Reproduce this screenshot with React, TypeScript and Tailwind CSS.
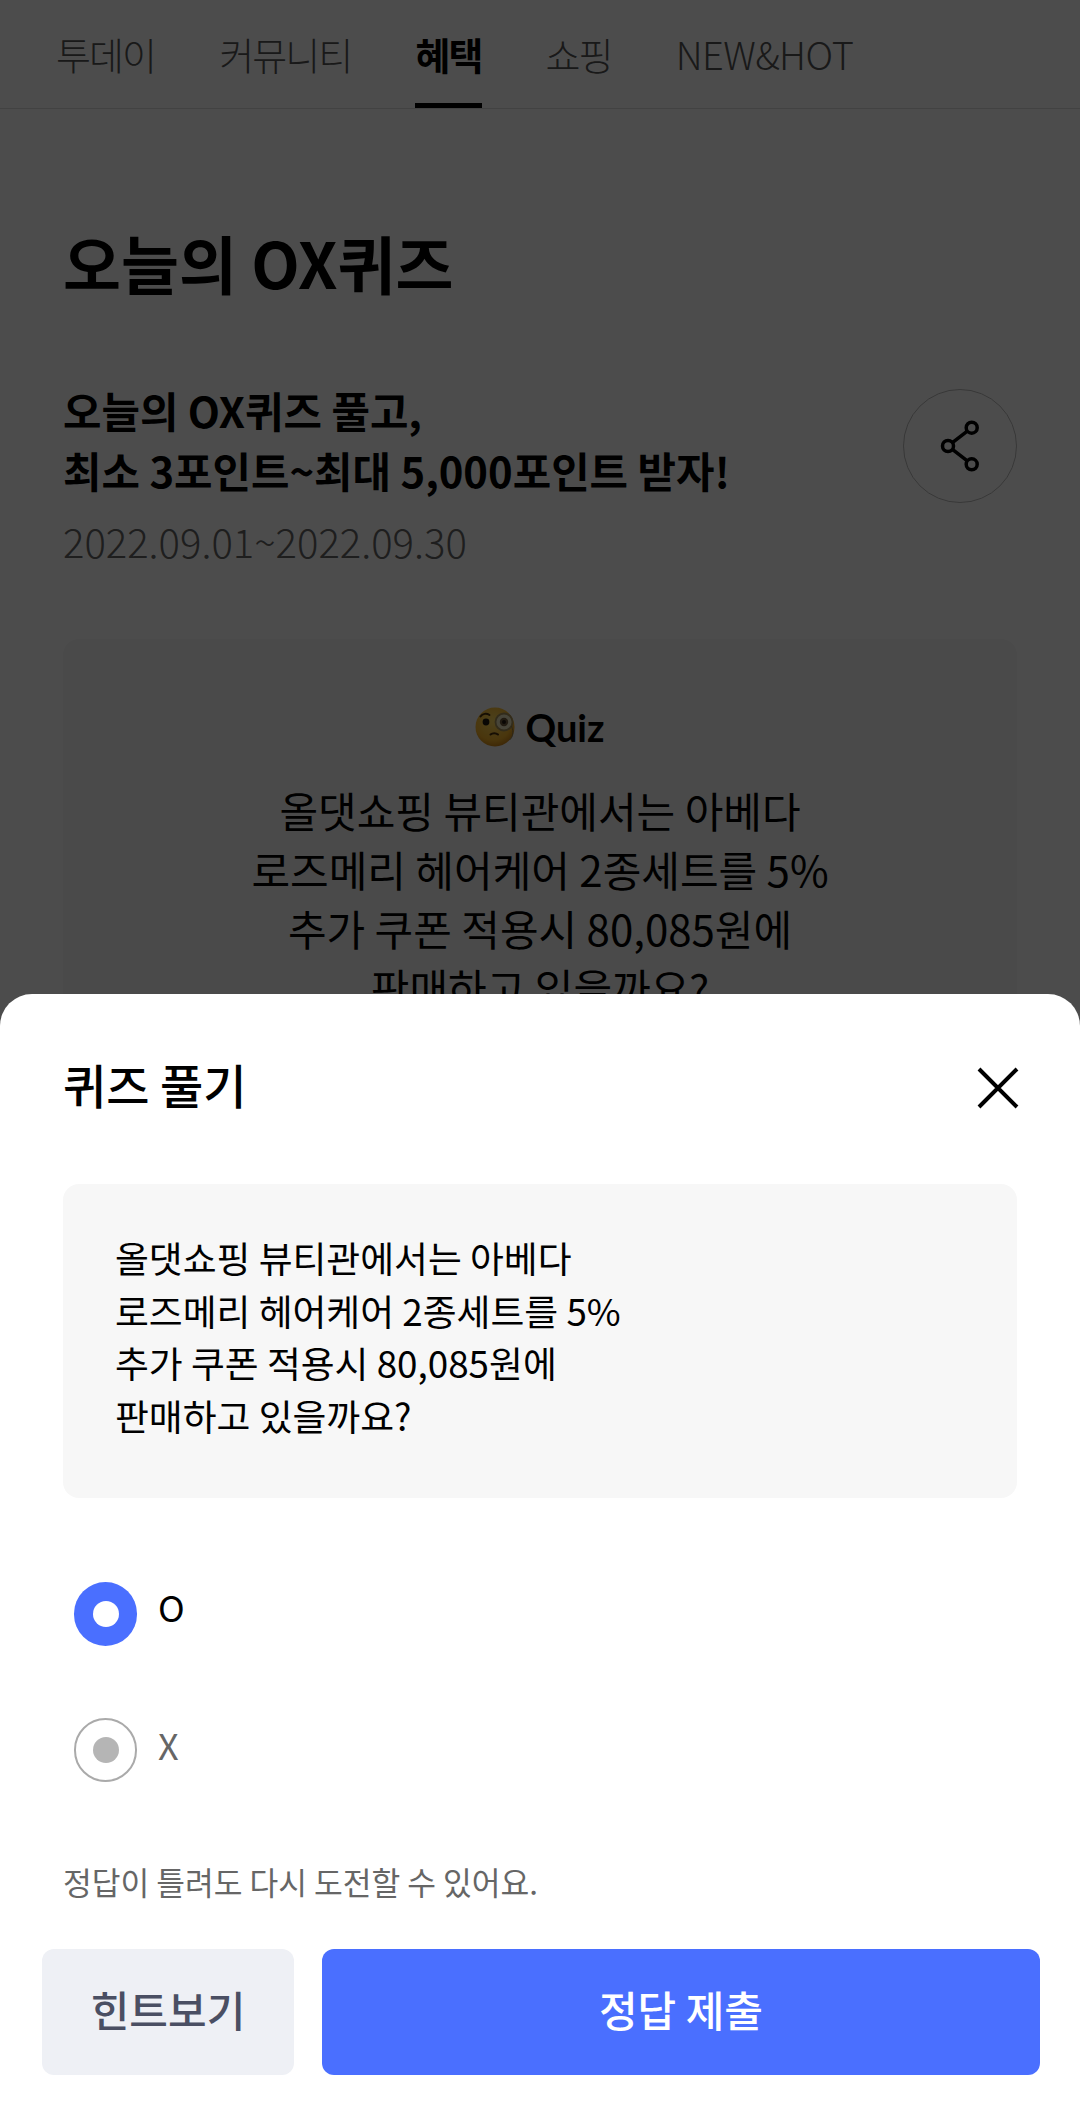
import React from "react";

const font = { fontFamily: '"Noto Sans CJK KR", "Noto Sans", sans-serif' };

function Emoji() {
  return (
    <svg width="42" height="42" viewBox="0 0 42 42" className="shrink-0">
      <defs>
        <radialGradient id="face" cx="45%" cy="35%" r="70%">
          <stop offset="0%" stopColor="#ffdc60" />
          <stop offset="70%" stopColor="#f7b52c" />
          <stop offset="100%" stopColor="#c47a14" />
        </radialGradient>
      </defs>
      <circle cx="20" cy="21" r="19.5" fill="url(#face)" />
      <circle cx="29" cy="16" r="8.5" fill="#efe6c0" stroke="#a8935c" strokeWidth="1.800" />
      <circle cx="29" cy="16" r="4.2" fill="#6e5a3a" />
      <circle cx="29" cy="16" r="2" fill="#221a10" />
      <circle cx="11" cy="16" r="3.400" fill="#1f1810" />
      <path d="M5.500 10.500c2-3 6-3.500 9-1.500" stroke="#4a2f0c" strokeWidth="2" fill="none" strokeLinecap="round" />
      <path d="M15.500 28.500c2-1.800 5.500-1.800 7.500 0" stroke="#4a2f0c" strokeWidth="2" fill="none" strokeLinecap="round" />
      <path d="M36.500 20c2.500 6 1.500 11-2 14" stroke="#8f7c4e" strokeWidth="1" fill="none" />
    </svg>
  );
}

function Tab({ label, active, wide }: { label: string; active?: boolean; wide?: boolean }) {
  return (
    <div
      className={
        "flex h-[108px] items-center border-b-[5px] pt-[3px] text-[38px] " +
        (wide ? "tracking-[-0.015em] " : "tracking-[-0.05em] ") +
        (active ? "border-black font-bold text-black" : "border-transparent font-light text-[#555]")
      }
    >
      {label}
    </div>
  );
}

export default function App() {
  return (
    <div style={font} className="relative h-[2116px] w-[1080px] overflow-hidden bg-white text-black">
      <div className="flex h-[109px] gap-[64px] border-b border-[#ddd] pl-[56px]">
        <Tab label="투데이" />
        <Tab label="커뮤니티" />
        <Tab label="혜택" active />
        <Tab label="쇼핑" />
        <Tab label="NEW&HOT" wide />
      </div>

      <div className="px-[63px]">
        <h1 className="mt-[113px] text-[63px] font-bold leading-[80px]">오늘의 OX퀴즈</h1>
        <div className="mt-[78px] flex items-start justify-between">
          <div>
            <p className="text-[41.800px] font-bold leading-[60px]">
              오늘의 OX퀴즈 풀고,
              <br />
              최소 3포인트~최대 5,000포인트 받자!
            </p>
            <p className="mt-[16px] text-[40px] font-light leading-[50px] text-[#666]">2022.09.01~2022.09.30</p>
          </div>
          <div className="mt-[9px] flex h-[114px] w-[114px] items-center justify-center rounded-full border border-[#bbb]">
            <svg width="40" height="52" viewBox="0 0 40 52" fill="none" stroke="#000" strokeWidth="3.500">
              <circle cx="31.700" cy="7.700" r="5.500" />
              <circle cx="8" cy="26" r="5.500" />
              <circle cx="31.700" cy="44.300" r="5.500" />
              <path d="M27.300 11.100 12.400 22.600M12.400 29.400 27.300 40.900" />
            </svg>
          </div>
        </div>
        <div className="mt-[73px] h-[500px] rounded-2xl bg-[#f7f7f7] px-[40px] pt-[63px] text-center">
          <div className="flex items-center justify-center gap-[8px] text-[38px] font-bold leading-[50px]">
            <Emoji />
            <span style={{ fontFamily: '"Lato", sans-serif' }}>Quiz</span>
          </div>
          <p className="mt-[28px] text-[42px] leading-[59px]">
            올댓쇼핑 뷰티관에서는 아베다
            <br />
            로즈메리 헤어케어 2종세트를 5%
            <br />
            추가 쿠폰 적용시 80,085원에
            <br />
            판매하고 있을까요?
          </p>
        </div>
      </div>

      <div className="absolute inset-0 bg-black/70" />

      <div className="absolute inset-x-0 bottom-0 h-[1122px] rounded-t-[32px] bg-white">
        <div className="flex items-center justify-between pl-[63px] pr-[61px] pt-[54px]">
          <h2 className="text-[47px] font-medium leading-[72px]">퀴즈 풀기</h2>
          <svg width="42" height="42" viewBox="0 0 42 42" stroke="#000" strokeWidth="4" className="mt-[8px]">
            <path d="M2 2 40 40M40 2 2 40" />
          </svg>
        </div>
        <div className="mx-[63px] mt-[64px] h-[314px] rounded-2xl bg-[#f7f7f7] pl-[52px] pt-[47px] text-[36.800px] leading-[52.700px]">
          올댓쇼핑 뷰티관에서는 아베다
          <br />
          로즈메리 헤어케어 2종세트를 5%
          <br />
          추가 쿠폰 적용시 80,085원에
          <br />
          판매하고 있을까요?
        </div>
        <div className="mt-[84px] flex h-[64px] items-start pl-[74px]">
          <div className="flex h-[64px] w-[63px] items-center justify-center rounded-full bg-[#4a6fff]">
            <div className="h-[26px] w-[26px] rounded-full bg-white" />
          </div>
          <span className="ml-[21px] text-[36px] leading-[48px]">O</span>
        </div>
        <div className="mt-[72px] flex h-[64px] items-start pl-[74px]">
          <div className="flex h-[64px] w-[63px] items-center justify-center rounded-full border-2 border-[#aaa]">
            <div className="h-[26px] w-[26px] rounded-full bg-[#b5b5b5]" />
          </div>
          <span className="ml-[21px] mt-[2px] text-[36px] leading-[48px] text-[#666]">X</span>
        </div>
        <p className="ml-[63px] mt-[78px] text-[31.250px] leading-[44px] text-[#666]">
          정답이 틀려도 다시 도전할 수 있어요.
        </p>
        <div className="mt-[45px] flex gap-[28px] pl-[42px] pr-[40px]">
          <button className="h-[126px] w-[252px] rounded-[12px] bg-[#eef0f5] pb-[8px] text-[42px] font-medium text-[#4a4f63]">
            힌트보기
          </button>
          <button className="h-[126px] flex-1 rounded-[12px] bg-[#4a6fff] pb-[8px] text-[42px] font-medium text-white">
            정답 제출
          </button>
        </div>
      </div>
    </div>
  );
}
